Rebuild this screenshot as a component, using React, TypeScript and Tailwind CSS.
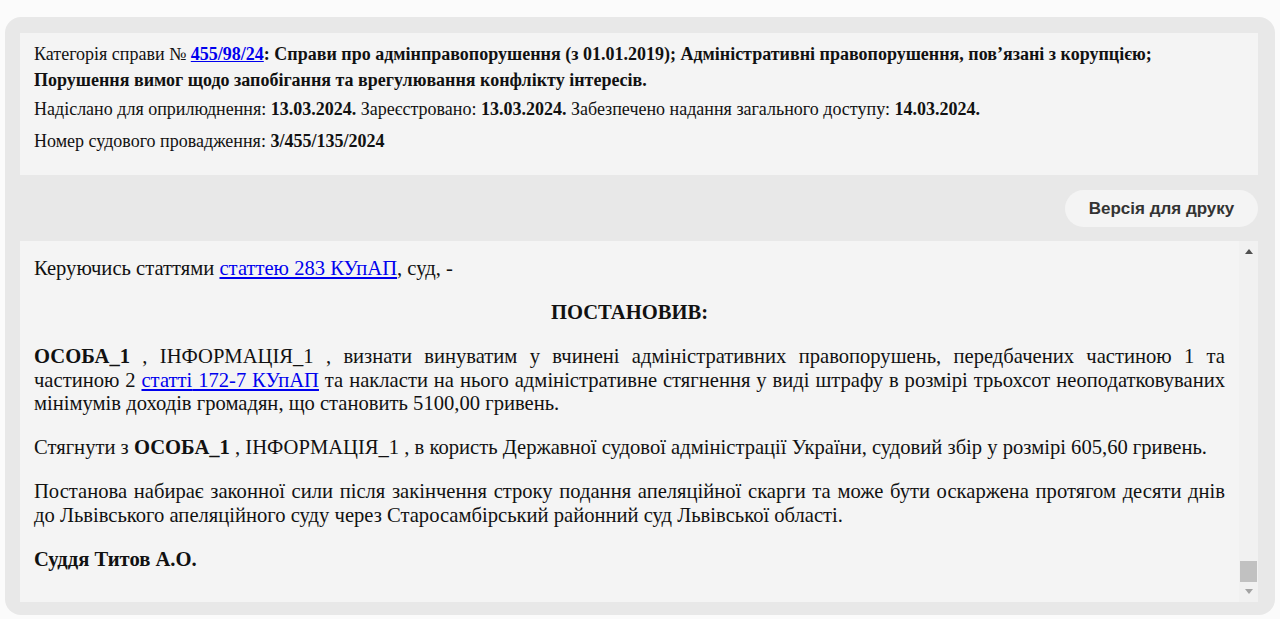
import React from 'react';

const serif = { fontFamily: '"Liberation Serif", "Times New Roman", serif' };

function FakeScrollbar() {
  return (
    <div className="w-[19px] shrink-0 bg-[#f1f1f1] flex flex-col items-center justify-between py-[8px]">
      <svg width="8" height="5" viewBox="0 0 8 5"><path d="M4 0 L8 5 L0 5 Z" fill="#505050" /></svg>
      <div className="flex flex-col items-center gap-[7px] w-full">
        <div className="w-[17px] h-[21px] bg-[#c1c1c1]" />
        <svg width="8" height="5" viewBox="0 0 8 5"><path d="M0 0 L8 0 L4 5 Z" fill="#a3a3a3" /></svg>
      </div>
    </div>
  );
}

export default function App() {
  return (
    <div className="min-h-[619px] bg-[#fbfbfb] pt-[17px] px-[5px] pb-[4px]">
      <div className="bg-[#e8e8e8] rounded-[16px] pt-[16px] pl-[15px] pr-[17px] pb-[13px]">
        {/* Header info */}
        <div className="bg-[#f4f4f4] pl-[14px] pr-[14px] pt-[8px] pb-[21px] text-[18px] text-[#111]" style={serif}>
          <div className="leading-[26px]">
            Категорія справи № <a href="#" className="text-[#0000ee] underline font-bold">455/98/24</a>
            <b>: Справи про адмінправопорушення (з 01.01.2019); Адміністративні правопорушення, пов’язані з корупцією; Порушення вимог щодо запобігання та врегулювання конфлікту інтересів.</b>
          </div>
          <div className="leading-[26px] mt-[3px]">
            Надіслано для оприлюднення: <b>13.03.2024.</b> Зареєстровано: <b>13.03.2024.</b> Забезпечено надання загального доступу: <b>14.03.2024.</b>
          </div>
          <div className="leading-[26px] mt-[6px]">
            Номер судового провадження: <b>3/455/135/2024</b>
          </div>
        </div>

        <div className="flex justify-end pt-[15px] pb-[14px]">
          <button
            className="h-[37px] w-[193px] rounded-full bg-[#f4f4f4] text-[17px] font-bold text-[#333]"
            style={{ fontFamily: '"Liberation Sans", Arial, sans-serif' }}
          >
            Версія для друку
          </button>
        </div>

        {/* Decision text */}
        <div className="bg-[#f4f4f4] flex h-[361px]">
          <div className="flex-1 pl-[14px] pr-[14px] pt-[16px] text-[20.6px] leading-[23.5px] text-[#111] text-justify" style={serif}>
            <p>
              Керуючись статтями <a href="#" className="text-[#0000ee] underline">статтею 283 КУпАП</a>, суд, -
            </p>
            <p className="text-center font-bold mt-[20.5px]">ПОСТАНОВИВ:</p>
            <p className="mt-[20.5px]">
              <b>ОСОБА_1</b> , ІНФОРМАЦІЯ_1 , визнати винуватим у вчинені адміністративних правопорушень, передбачених частиною 1 та{' '}
              <span className="whitespace-nowrap">частиною 2 <a href="#" className="text-[#0000ee] underline">статті</a></span>
              <a href="#" className="text-[#0000ee] underline"> 172-7 КУпАП</a> та накласти на нього адміністративне стягнення у виді штрафу в розмірі трьохсот неоподатковуваних мінімумів доходів громадян, що становить 5100,00 гривень.
            </p>
            <p className="mt-[20.5px]">
              Стягнути з <b>ОСОБА_1</b> , ІНФОРМАЦІЯ_1 , в користь Державної судової адміністрації України, судовий збір у розмірі 605,60 гривень.
            </p>
            <p className="mt-[20.5px]">
              Постанова набирає законної сили після закінчення строку подання апеляційної скарги та може бути оскаржена протягом десяти днів до Львівського апеляційного суду через Старосамбірський районний суд Львівської області.
            </p>
            <p className="mt-[20.5px] font-bold">Суддя Титов А.О.</p>
          </div>
          <FakeScrollbar />
        </div>
      </div>
    </div>
  );
}
